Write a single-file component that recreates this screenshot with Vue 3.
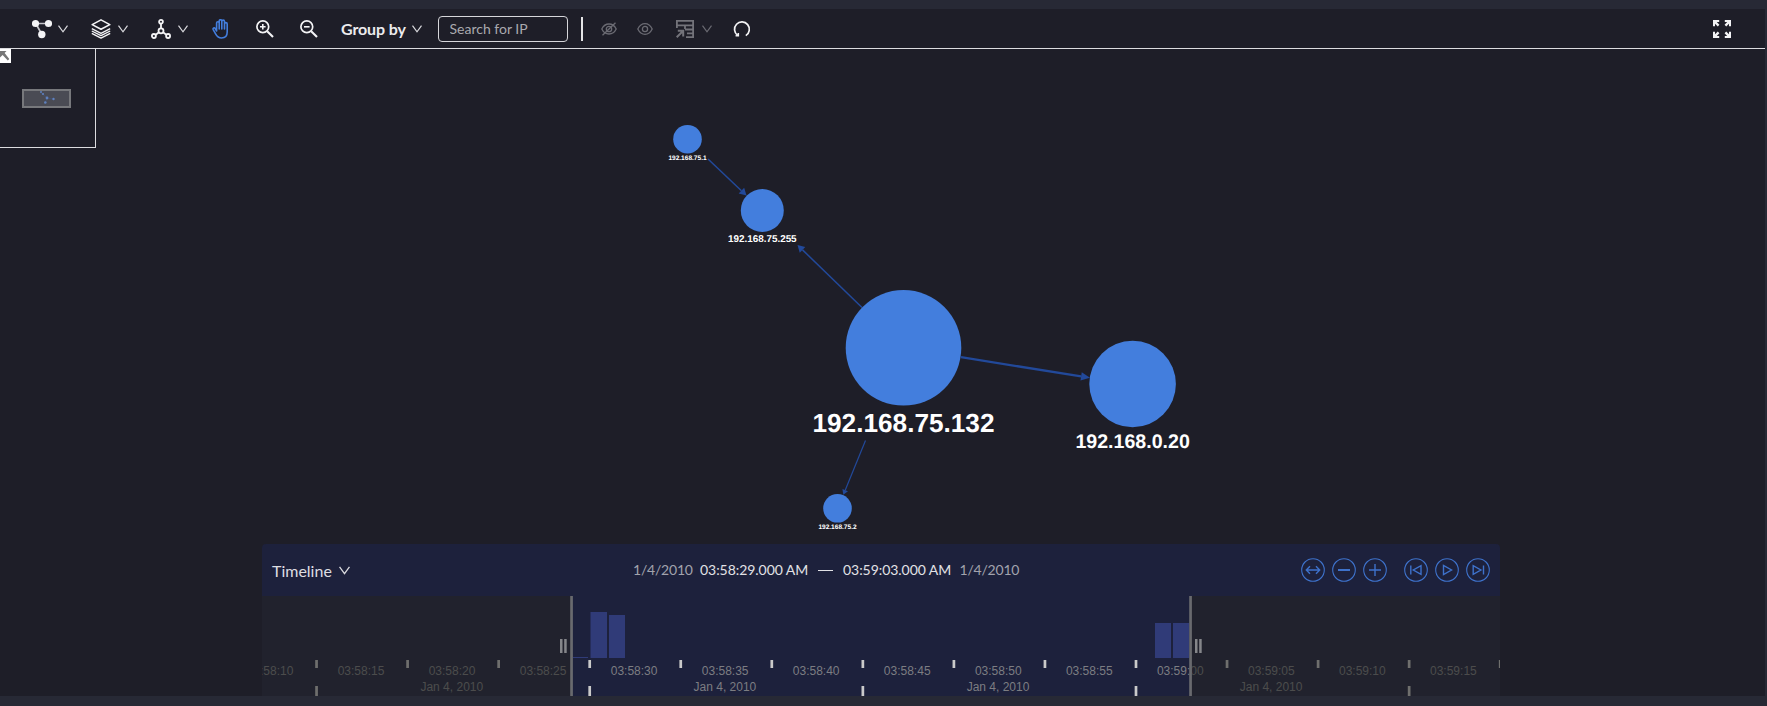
<script setup>
const nodes = [
  { label: '192.168.75.1', x: 687.5, y: 139.2, r: 14.3, size: 6.56, base: 160.3 },
  { label: '192.168.75.255', x: 762.3, y: 210.5, r: 21.5, size: 9.9, base: 242.3 },
  { label: '192.168.75.132', x: 903.5, y: 347.8, r: 57.8, size: 26.2, base: 432.2 },
  { label: '192.168.0.20', x: 1132.6, y: 384, r: 43.3, size: 19.6, base: 448 },
  { label: '192.168.75.2', x: 837.5, y: 508.3, r: 14.3, size: 6.56, base: 529.3 }
]
const edge = (x1, y1, x2, y2, w, a, b) => {
  const len = Math.hypot(x2 - x1, y2 - y1)
  const ux = (x2 - x1) / len
  const uy = (y2 - y1) / len
  const bx = x2 - ux * a
  const by = y2 - uy * a
  return {
    x1, y1, x2: bx, y2: by, w,
    head: `${x2},${y2} ${bx - uy * b},${by + ux * b} ${bx + uy * b},${by - ux * b}`
  }
}
const edges = [
  edge(708, 159, 746.5, 195.5, 1.5, 7, 4),
  edge(862, 307.5, 797.5, 245, 1.5, 7, 4),
  edge(961, 357.2, 1090, 377.8, 2.3, 9, 4.2),
  edge(865.5, 440.5, 843.3, 494.8, 1.2, 5, 3)
]
const times = ['03:58:10', '03:58:15', '03:58:20', '03:58:25', '03:58:30', '03:58:35', '03:58:40',
  '03:58:45', '03:58:50', '03:58:55', '03:59:00', '03:59:05', '03:59:10', '03:59:15']
const ticks = Array.from({ length: 14 }, (_, i) => 53.2 + i * 91.05)
const bars = [
  { x: 311, y: 61, w: 15, h: 1 },
  { x: 328.5, y: 16, w: 16.5, h: 46 },
  { x: 347, y: 19, w: 16, h: 43 },
  { x: 893, y: 27, w: 16, h: 35 },
  { x: 911, y: 27, w: 16, h: 35 }
]
</script>

<template>
  <main class="page">
    <section class="panel">
      <header class="toolbar">
        <svg class="ic graph" width="20" height="20" viewBox="0 0 20 20">
          <path d="M3.5 4.5H16.5M4 5L10 15.5" stroke="#c4c4c9" stroke-width="1.7" />
          <g fill="#f4f4f6"><circle cx="3.5" cy="4.5" r="3.6" /><circle cx="16.5" cy="4.5" r="3.6" /><circle cx="9.8" cy="15.5" r="3.7" /></g>
        </svg>
        <svg class="chev" width="10" height="8" viewBox="0 0 10 8"><path d="M.5.7L5 6.8L9.5.7" /></svg>
        <svg class="ic layers" width="20" height="20" viewBox="0 0 20 20" fill="none" stroke="#f4f4f6" stroke-width="1.6" stroke-linejoin="round">
          <path d="M10 .9L18.8 5.6L10 10.3L1.2 5.6Z" /><path d="M.8 9.6L10 14.3L19.2 9.6M.8 14.4L10 19.2L19.2 14.4M.8 12L10 16.7L19.2 12" stroke-width="1.3" />
        </svg>
        <svg class="chev" width="10" height="8" viewBox="0 0 10 8"><path d="M.5.7L5 6.8L9.5.7" /></svg>
        <svg class="ic tree" width="20" height="20" viewBox="0 0 20 20" fill="none" stroke="#f4f4f6" stroke-width="1.8">
          <circle cx="10" cy="2.8" r="1.9" /><circle cx="10" cy="11.8" r="2.5" /><circle cx="2.9" cy="17" r="2" /><circle cx="17.1" cy="17" r="2" />
          <path d="M10 4.8V9M8 13.2L4.7 15.7M12 13.2L15.3 15.7" />
        </svg>
        <svg class="chev" width="10" height="8" viewBox="0 0 10 8"><path d="M.5.7L5 6.8L9.5.7" /></svg>
        <svg class="ic hand" width="18" height="20" viewBox="0 0 18 20" fill="none" stroke="#437edd" stroke-width="1.6" stroke-linecap="round" stroke-linejoin="round">
          <path d="M4.6 12V4a1.2 1.2 0 0 1 2.6 0V10M7.2 10V2a1.25 1.25 0 0 1 2.6 0V10M9.8 9.5V2.5a1.3 1.3 0 0 1 2.7 0V10M12.5 10V5a1.2 1.2 0 0 1 2.7 0V13c0 4-2 6-5.6 6C6.4 19 5 17.4 3.6 14.8L1.2 10.6c-.6-1.6 1.2-2.2 1.9-1.2L4.6 12" />
        </svg>
        <svg class="ic zin" width="18" height="18" viewBox="0 0 18 18" fill="none" stroke="#f4f4f6">
          <circle cx="6.8" cy="6.8" r="5.9" stroke-width="1.7" /><path d="M11.2 11.2L17 17" stroke-width="2.1" /><path d="M4 6.8H9.6M6.8 4V9.6" stroke-width="1.6" />
        </svg>
        <svg class="ic zout" width="18" height="18" viewBox="0 0 18 18" fill="none" stroke="#f4f4f6">
          <circle cx="6.8" cy="6.8" r="5.9" stroke-width="1.7" /><path d="M11.2 11.2L17 17" stroke-width="2.1" /><path d="M4 6.8H9.6" stroke-width="1.6" />
        </svg>
        <span class="group">Group by</span>
        <svg class="chev gchev" width="10" height="8" viewBox="0 0 10 8"><path d="M.5.7L5 6.8L9.5.7" /></svg>
        <input class="search" type="text" placeholder="Search for IP">
        <i class="divider" />
        <svg class="ic eyeoff" width="16" height="14" viewBox="0 0 16 14" fill="none" stroke="#6b6b73" stroke-width="1.3">
          <path d="M.8 7C2.5 3.5 5 2 8 2s5.5 1.5 7.2 5C13.5 10.5 11 12 8 12S2.5 10.5.8 7Z" /><circle cx="8" cy="7" r="2.7" /><path d="M1.5 13.3L14.5.7" />
        </svg>
        <svg class="ic eye" width="16" height="14" viewBox="0 0 16 14" fill="none" stroke="#6b6b73" stroke-width="1.3">
          <path d="M.8 7C2.5 3.5 5 1.7 8 1.7s5.5 1.8 7.2 5.3C13.5 10.5 11 12.3 8 12.3S2.5 10.5.8 7Z" /><circle cx="8" cy="7" r="2.6" />
        </svg>
        <svg class="ic table" width="18" height="18" viewBox="0 0 18 18" fill="none" stroke="#73737a" stroke-width="1.8">
          <path d="M.9 8V.9H17.1V17.1H10M.9 5.3H17M9 5.3V9M9 9.5H17M11 13.3H17" /><path d="M.7 17.3L7 11M1.8 10.8H7.2V16.5" stroke-width="2" />
        </svg>
        <svg class="chev dim" width="10" height="8" viewBox="0 0 10 8"><path d="M.5.7L5 6.8L9.5.7" /></svg>
        <svg class="ic reset" width="18" height="18" viewBox="0 0 18 18" fill="none" stroke="#f4f4f6" stroke-width="1.7">
          <path d="M4.6 15.3A7.4 7.4 0 1 1 12.8 15.6" /><path d="M2.6 15.6H5.3V12.9" stroke-width="1.6" />
        </svg>
        <svg class="ic full" width="18" height="18" viewBox="0 0 18 18">
          <g fill="#f4f4f6"><path d="M0 0H6.2V2H3.8L6.4 4.8L4.8 6.4L2 3.8V6.2H0Z" /><path d="M18 0V6.2H16V3.8L13.2 6.4L11.6 4.8L14.2 2H11.8V0Z" /><path d="M0 18V11.8H2V14.2L4.8 11.6L6.4 13.2L3.8 16H6.2V18Z" /><path d="M18 18H11.8V16H14.2L11.6 13.2L13.2 11.6L16 14.2V11.8H18Z" /></g>
        </svg>
      </header>

      <div class="canvas">
        <svg class="net" width="1765" height="647" viewBox="0 49 1765 647">
          <g v-for="(e, i) in edges" :key="i">
            <line :x1="e.x1" :y1="e.y1" :x2="e.x2" :y2="e.y2" stroke="#22499a" :stroke-width="e.w" />
            <polygon :points="e.head" fill="#22499a" />
          </g>
          <g v-for="n in nodes" :key="n.label">
            <circle :cx="n.x" :cy="n.y" :r="n.r" fill="#437edd" />
            <text :x="n.x" :y="n.base" :font-size="n.size" class="nlabel">{{ n.label }}</text>
          </g>
        </svg>

        <div class="minimap">
          <svg class="collapse" width="11" height="14" viewBox="0 0 11 14">
            <rect width="11" height="14" fill="#fff" /><path d="M0 2H6.5L4.6 4L9.3 10L7.8 11.4L2.6 6L0 8.5Z" fill="#777" />
          </svg>
          <svg class="overview" width="49" height="19" viewBox="0 0 49 19">
            <rect x="1" y="1" width="47" height="17" fill="#4a4b54" stroke="#77787c" stroke-width="2" />
            <path d="M19 3.5L25 9L31 10M25 9L23.5 13" stroke="#3d5688" stroke-width=".6" fill="none" />
            <g fill="#5f80bd"><circle cx="19" cy="3" r="1" /><circle cx="21" cy="5" r="1.1" /><circle cx="25" cy="9" r="1.4" /><circle cx="31.5" cy="10" r="1.2" /><circle cx="23.3" cy="13.5" r="1.3" /></g>
          </svg>
        </div>

        <section class="timeline">
          <header class="thead">
            <span class="ttitle">Timeline</span>
            <svg class="chev tchev" width="11" height="9" viewBox="0 0 10 8"><path d="M.5.7L5 6.8L9.5.7" /></svg>
            <div class="range">
              <span class="date">1/4/2010</span><span class="clock">03:58:29.000 AM</span><i class="dash" /><span class="clock">03:59:03.000 AM</span><span class="date">1/4/2010</span>
            </div>
            <div class="controls">
              <svg viewBox="0 0 24 24"><circle cx="12" cy="12" r="11.3" /><path d="M5.5 12H18.5M9 8.2L5.3 12L9 15.8M15 8.2L18.7 12L15 15.8" /></svg>
              <svg viewBox="0 0 24 24"><circle cx="12" cy="12" r="11.3" /><path d="M6 12H18" stroke-width="1.9" /></svg>
              <svg viewBox="0 0 24 24"><circle cx="12" cy="12" r="11.3" /><path d="M6 12H18M12 6V18" /></svg>
              <svg class="gap" viewBox="0 0 24 24"><circle cx="12" cy="12" r="11.3" /><path d="M6.8 7.5V16.5M17 7.7V16.3L9.3 12Z" /></svg>
              <svg viewBox="0 0 24 24"><circle cx="12" cy="12" r="11.3" /><path d="M8.5 7.5V16.5L16.5 12Z" /></svg>
              <svg viewBox="0 0 24 24"><circle cx="12" cy="12" r="11.3" /><path d="M17.5 7.5V16.5M7.2 7.7V16.3L14.9 12Z" /></svg>
            </div>
          </header>
          <svg class="chart" width="1238" height="100" viewBox="0 0 1238 100">
            <rect v-for="(b, i) in bars" :key="'b' + i" :x="b.x" :y="b.y" :width="b.w" :height="b.h" fill="#303b78" />
            <g v-for="(t, i) in ticks" :key="t" fill="#cacaca">
              <rect :x="t" y="64" width="2.7" height="8" />
              <rect v-if="i % 3 === 0" :x="t" y="90" width="2.7" height="10" />
            </g>
            <text v-for="(t, i) in times" :key="t" :x="8 + i * 91.03" y="79" class="tlabel">{{ t }}</text>
            <text v-for="i in 4" :key="'d' + i" :x="189.8 + (i - 1) * 273.1" y="95" class="tlabel">Jan 4, 2010</text>
            <g fill="#242420" fill-opacity=".55"><rect width="309" height="100" /><rect x="929" width="309" height="100" /></g>
            <g fill="#696a6e"><rect x="308.2" width="2.7" height="100" /><rect x="927.2" width="2.7" height="100" /></g>
            <g fill="#85868a"><rect x="298" y="43" width="2.5" height="14" /><rect x="302.2" y="43" width="2.5" height="14" /><rect x="933" y="43" width="2.5" height="14" /><rect x="937.2" y="43" width="2.5" height="14" /></g>
          </svg>
        </section>
      </div>
    </section>
  </main>
</template>

<style>
body { margin: 0; background: #272935; overflow: hidden; }
</style>

<style scoped>
.page { box-sizing: border-box; width: 1767px; height: 706px; padding: 9px 2px 10px 0; background: #272935; font-family: Lato, "Liberation Sans", sans-serif; }
.panel { height: 687px; background: #1e1e28; display: flex; flex-direction: column; }
.toolbar { box-sizing: border-box; height: 40px; flex: none; display: flex; align-items: center; padding: 0 34px 0 32px; border-bottom: 1px solid #dcdce0; }
.toolbar > * { flex: none; }
.chev { fill: none; stroke: #dadade; stroke-width: 1.2; margin-left: 6px; }
.chev.dim { stroke: #6b6b73; margin-left: 8px; }
.graph, .layers, .tree, .hand { margin-top: 1px; }
.layers { margin-left: 23px; }
.layers + .chev, .tree + .chev { margin-left: 7px; }
.tree { margin-left: 23px; }
.hand { margin-left: 24px; }
.zin { margin-left: 26px; }
.zout { margin-left: 26px; }
.group { width: 66px; margin-left: 23px; font-size: 16px; line-height: 20px; font-weight: 700; color: #ececee; white-space: nowrap; letter-spacing: -.1px; }
.gchev { margin-left: 5px; }
.search { box-sizing: border-box; width: 130px; height: 26px; margin: 1px 0 0 16px; padding: 0 10.5px 1px; border: 1px solid #d6d6da; border-radius: 4px; background: transparent; font: 14px Lato, sans-serif; color: #ddd; outline: none; }
.search::placeholder { color: #a9a9ae; opacity: 1; }
.divider { width: 2px; height: 24px; margin: 1px 0 0 13px; background: #e4e4e6; }
.eyeoff { margin: 1px 0 0 18px; }
.eye { margin: 1px 0 0 20px; }
.table { margin: 1px 0 0 23px; }
.reset { margin-left: 21px; margin-top: 1px; }
.full { margin-left: auto; margin-top: 1px; }
.canvas { position: relative; flex: 1; overflow: hidden; }
.net { display: block; }
.nlabel { font-family: "Liberation Sans", Arial, sans-serif; font-weight: 700; fill: #fff; text-anchor: middle; text-rendering: geometricPrecision; }
.minimap { box-sizing: border-box; position: absolute; left: 0; top: 0; width: 96px; height: 99px; border-right: 1px solid #dcdce0; border-bottom: 1px solid #dcdce0; background: #1e1e28; }
.collapse { display: block; }
.overview { display: block; margin: 26px 0 0 22px; }
.timeline { position: absolute; left: 262px; bottom: 0; width: 1238px; height: 152px; border-radius: 4px 4px 0 0; overflow: hidden; background: #1d213c; }
.thead { height: 52px; display: flex; align-items: center; }
.ttitle { width: 61px; margin: 0 0 0 10px; font-size: 16px; color: #dedee2; white-space: nowrap; }
.tchev { margin: 1px 0 0 6px; }
.range { width: 386px; margin: 0 0 1px 283px; display: flex; align-items: center; gap: 8.5px; font-size: 14px; white-space: nowrap; }
.date { width: 58.5px; color: #a2a3ad; letter-spacing: -.2px; }
.clock { width: 108px; color: #e2e2e6; letter-spacing: -.05px; }
.dash { width: 15px; height: 1px; margin: 2px 1.5px 0; background: #e2e2e6; }
.controls { margin-left: auto; margin-right: 10px; display: flex; gap: 7.2px; }
.controls svg { width: 24px; height: 24px; fill: none; stroke: #3e72cb; stroke-width: 1.4; }
.controls circle { stroke-width: 1.1; }
.controls .gap { margin-left: 9.5px; }
.chart { display: block; }
.tlabel { font: 12px "Liberation Sans", Arial, sans-serif; fill: #7c7d82; text-anchor: middle; }
</style>
